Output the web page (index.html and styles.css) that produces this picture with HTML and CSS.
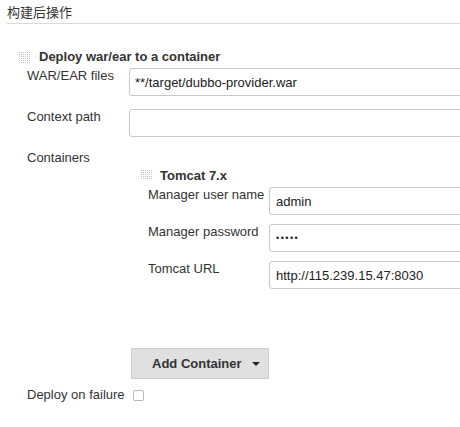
FILE: index.html
```html
<!DOCTYPE html>
<html>
<head>
<meta charset="utf-8">
<link rel="stylesheet" href="styles.css">
</head>
<body>
<div class="page">
  <div class="section-title">构建后操作</div>
  <div class="block">
    <div class="block-head"><span class="handle"></span><span class="block-title">Deploy war/ear to a container</span></div>
    <div class="row first"><label class="label">WAR/EAR files</label><input class="field outer" type="text" value="**/target/dubbo-provider.war"></div>
    <div class="row"><label class="label">Context path</label><input class="field outer" type="text" value=""></div>
    <div class="row">
      <div class="label">Containers</div>
      <div class="containers">
        <div class="sub-head"><span class="handle small"></span><span class="block-title">Tomcat 7.x</span></div>
        <div class="sub-row first"><label class="sub-label">Manager user name</label><input class="field" type="text" value="admin"></div>
        <div class="sub-row"><label class="sub-label">Manager password</label><input class="field password" type="password" value="admin"></div>
        <div class="sub-row"><label class="sub-label">Tomcat URL</label><input class="field" type="text" value="http://115.239.15.47:8030"></div>
      </div>
    </div>
    <div class="button-row"><button class="add-btn" type="button"><span>Add Container</span><span class="caret"></span></button></div>
    <div class="row check-row"><label class="label">Deploy on failure</label><input class="check" type="checkbox"></div>
  </div>
</div>
</body>
</html>
```

FILE: styles.css
```css
html, body {
  margin: 0;
  padding: 0;
  background: #fff;
  overflow: hidden;
}
body {
  font-family: "Liberation Sans", Arial, "Noto Sans CJK SC", sans-serif;
  font-size: 13px;
  color: #333;
}
.page {
  width: 460px;
}
.section-title {
  margin-left: 7px;
  height: 24px;
  box-sizing: border-box;
  padding-top: 5px;
  line-height: 16px;
  border-bottom: 1px solid #d9d9d9;
  color: #333;
}
.block-head {
  display: flex;
  align-items: center;
  height: 14px;
  margin-top: 26px;
  padding-left: 19px;
  gap: 8px;
}
.handle {
  display: block;
  width: 12px;
  height: 12px;
  flex: none;
  background-image:
    repeating-linear-gradient(90deg, transparent 0 1px, #fff 1px 2px),
    repeating-linear-gradient(0deg, #c2c2c2 0 1px, #fff 1px 2px);
}
.handle.small {
  width: 11px;
  height: 10px;
  margin-top: 1px;
}
.block-title {
  font-weight: bold;
  line-height: 16px;
  color: #333;
}
.row {
  display: flex;
  align-items: flex-start;
  padding-left: 27px;
  margin-top: 13px;
}
.row.first {
  margin-top: 4px;
}
.label {
  width: 102px;
  flex: none;
  line-height: 16px;
}
.field {
  flex: 1;
  min-width: 0;
  height: 28px;
  margin: 0 -10px 0 0;
  box-sizing: border-box;
  border: 1px solid #c8c8c8;
  border-radius: 3px;
  padding: 0 6px;
  font-family: "Liberation Sans", Arial, sans-serif;
  font-size: 13px;
  color: #222;
  background: #fff;
  outline: none;
}
.field.outer {
  padding-left: 5px;
}
.field.password {
  font-size: 9px;
  letter-spacing: 1.5px;
}
.containers {
  flex: 1;
  min-width: 0;
  padding-left: 12px;
}
.sub-head {
  display: flex;
  align-items: flex-start;
  gap: 8px;
  margin-top: 18px;
  height: 16px;
}
.sub-row {
  display: flex;
  align-items: flex-start;
  margin-top: 9px;
}
.sub-row.first {
  margin-top: 3px;
}
.sub-label {
  width: 128px;
  box-sizing: border-box;
  padding-left: 7px;
  flex: none;
  line-height: 16px;
}
.button-row {
  padding-left: 131px;
  margin-top: 59px;
}
.add-btn {
  display: flex;
  align-items: center;
  justify-content: space-between;
  height: 31px;
  width: 138px;
  box-sizing: border-box;
  padding: 0 8px 0 20px;
  margin: 0;
  border: 1px solid #cfcfcf;
  border-radius: 0;
  background: #e0e0e0;
  font-family: "Liberation Sans", Arial, sans-serif;
  font-size: 13px;
  font-weight: bold;
  color: #333;
  white-space: nowrap;
}
.caret {
  width: 0;
  height: 0;
  border-left: 4px solid transparent;
  border-right: 4px solid transparent;
  border-top: 4px solid #222;
  margin-top: 1px;
}
.check-row {
  margin-top: 8px;
}
.check {
  -webkit-appearance: none;
  appearance: none;
  width: 11px;
  height: 11px;
  margin: 3px 0 0 4px;
  border: 1px solid #b8b8b8;
  border-radius: 2px;
  background: #fff;
  box-sizing: border-box;
}
```
